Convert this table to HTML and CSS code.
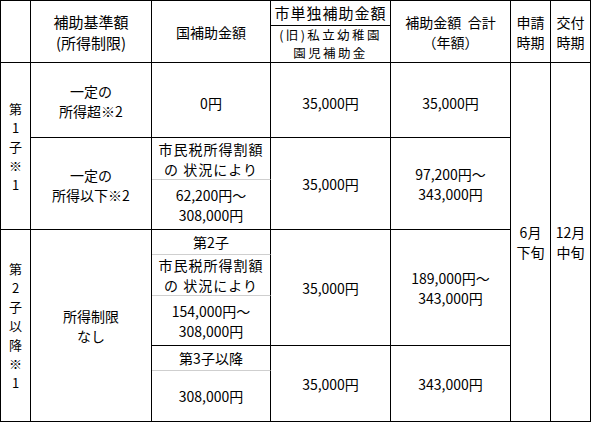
FILE: index.html
```html
<!DOCTYPE html>
<html lang="ja">
<head>
<meta charset="utf-8">
<title>補助金額表</title>
<link rel="stylesheet" href="styles.css">
</head>
<body>
<div class="table">
  <div class="cell a-corner"></div>
  <div class="cell a-kijun f15">補助基準額<br>(所得制限)</div>
  <div class="cell a-kuni">国補助金額</div>
  <div class="cell a-shi f15 sp1">市単独補助金額</div>
  <div class="cell a-shisub tight">(旧)私立幼稚園<br>園児補助金</div>
  <div class="cell a-total">補助金額&nbsp;&nbsp;合計<br>（年額）</div>
  <div class="cell a-apply-h">申請<br>時期</div>
  <div class="cell a-grant-h">交付<br>時期</div>

  <div class="cell a-g1 vert">第<br>1<br>子<br>※<br>1</div>
  <div class="cell a-r1k">一定の<br>所得超※2</div>
  <div class="cell a-r1n">0円</div>
  <div class="cell a-r1s">35,000円</div>
  <div class="cell a-r1t">35,000円</div>
  <div class="cell a-apply">6月<br>下旬</div>
  <div class="cell a-grant">12月<br>中旬</div>

  <div class="cell a-r2k">一定の<br>所得以下※2</div>
  <div class="cell a-r2n1 sub sp1">市民税所得割額<br>の 状況により</div>
  <div class="cell a-r2n2">62,200円～<br>308,000円</div>
  <div class="cell a-r2s">35,000円</div>
  <div class="cell a-r2t">97,200円～<br>343,000円</div>

  <div class="cell a-g2 vert">第<br>2<br>子<br>以<br>降<br>※<br>1</div>
  <div class="cell a-r3k">所得制限<br>なし</div>
  <div class="cell a-r3n1 sub">第2子</div>
  <div class="cell a-r3n2 sub sp1">市民税所得割額<br>の 状況により</div>
  <div class="cell a-r3n3">154,000円～<br>308,000円</div>
  <div class="cell a-r3s">35,000円</div>
  <div class="cell a-r3t">189,000円～<br>343,000円</div>

  <div class="cell a-r4n1 sub">第3子以降</div>
  <div class="cell a-r4n2">308,000円</div>
  <div class="cell a-r4s">35,000円</div>
  <div class="cell a-r4t">343,000円</div>
</div>
</body>
</html>
```

FILE: styles.css
```css
html, body {
  margin: 0;
  padding: 0;
  background: #ffffff;
}

body {
  font-family: "Noto Sans CJK JP", "Noto Sans", sans-serif;
  font-size: 14px;
  color: #000000;
}

.table {
  display: grid;
  grid-template-columns: 30px 121px 119px 120px 120px 40px 40px;
  grid-template-rows: 25px 37px 75px 42px 50px 25px 41px 50px 25px 51px;
  width: max-content;
  border-left: 1px solid #000;
  border-top: 1px solid #000;
}

.cell {
  display: flex;
  align-items: center;
  justify-content: center;
  text-align: center;
  line-height: 20px;
  border-right: 1px solid #000;
  border-bottom: 1px solid #000;
  white-space: nowrap;
}

.sub { border-bottom-color: #cfcfcf; }

.f15 { font-size: 15px; line-height: 22px; }
.sp1 { letter-spacing: 1px; }
.tight { font-size: 12.5px; line-height: 18px; letter-spacing: 2.4px; }
.vert { font-size: 13px; line-height: 19px; }

/* header */
.a-corner  { grid-area: 1 / 1 / 3 / 2; }
.a-kijun   { grid-area: 1 / 2 / 3 / 3; line-height: 21px; }
.a-kuni    { grid-area: 1 / 3 / 3 / 4; }
.a-shi     { grid-area: 1 / 4 / 2 / 5; }
.a-shisub  { grid-area: 2 / 4 / 3 / 5; }
.a-total   { grid-area: 1 / 5 / 3 / 6; }
.a-apply-h { grid-area: 1 / 6 / 3 / 7; }
.a-grant-h { grid-area: 1 / 7 / 3 / 8; }

/* first child */
.a-g1   { grid-area: 3 / 1 / 6 / 2; }
.a-r1k  { grid-area: 3 / 2 / 4 / 3; padding-top: 2px; }
.a-r1n  { grid-area: 3 / 3 / 4 / 4; padding-top: 6px; }
.a-r1s  { grid-area: 3 / 4 / 4 / 5; padding-top: 6px; }
.a-r1t  { grid-area: 3 / 5 / 4 / 6; padding-top: 6px; }
.a-apply { grid-area: 3 / 6 / 11 / 7; }
.a-grant { grid-area: 3 / 7 / 11 / 8; }

.a-r2k  { grid-area: 4 / 2 / 6 / 3; padding-top: 2px; }
.a-r2n1 { grid-area: 4 / 3 / 5 / 4; }
.a-r2n2 { grid-area: 5 / 3 / 6 / 4; }
.a-r2s  { grid-area: 4 / 4 / 6 / 5; }
.a-r2t  { grid-area: 4 / 5 / 6 / 6; }

/* second child and later */
.a-g2   { grid-area: 6 / 1 / 11 / 2; }
.a-r3k  { grid-area: 6 / 2 / 11 / 3; }
.a-r3n1 { grid-area: 6 / 3 / 7 / 4; }
.a-r3n2 { grid-area: 7 / 3 / 8 / 4; }
.a-r3n3 { grid-area: 8 / 3 / 9 / 4; }
.a-r3s  { grid-area: 6 / 4 / 9 / 5; }
.a-r3t  { grid-area: 6 / 5 / 9 / 6; }

.a-r4n1 { grid-area: 9 / 3 / 10 / 4; }
.a-r4n2 { grid-area: 10 / 3 / 11 / 4; }
.a-r4s  { grid-area: 9 / 4 / 11 / 5; }
.a-r4t  { grid-area: 9 / 5 / 11 / 6; }
```
